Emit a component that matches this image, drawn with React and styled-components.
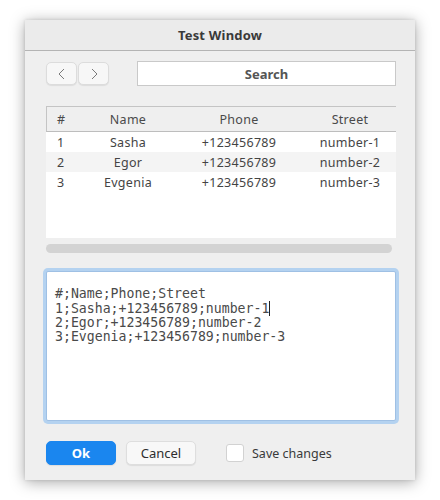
import React from "react";
import styled, { createGlobalStyle } from "styled-components";

const Global = createGlobalStyle`
  html, body { margin: 0; padding: 0; background: #ffffff; }
  body { font-family: "Noto Sans", "Open Sans", sans-serif; }
`;

const Page = styled.div`
  padding: 20px 25px;
`;

const Window = styled.div`
  width: 390px;
  height: 460px;
  background: #efefef;
  box-shadow: 0 2px 14px rgba(0, 0, 0, 0.35), 0 0 3px rgba(0, 0, 0, 0.12);
  display: flex;
  flex-direction: column;
`;

const TitleBar = styled.div`
  height: 30px;
  border-bottom: 1px solid #b4b4b4;
  background: #ebebeb;
  display: flex;
  align-items: center;
  justify-content: center;
  font-weight: 700;
  font-size: 13px;
  color: #3a3a3a;
  letter-spacing: 0.2px;
`;

const Body = styled.div`
  flex: 1;
  padding: 10px 19px 0 21px;
  display: flex;
  flex-direction: column;
`;

const Toolbar = styled.div`
  display: flex;
  align-items: center;
  height: 25px;
`;

const NavGroup = styled.div`
  display: flex;
  gap: 1px;
`;

const NavButton = styled.button`
  width: 31px;
  height: 23px;
  padding: 0;
  border: 1px solid #dcdcdc;
  border-radius: 5px;
  background: #f7f7f7;
  box-shadow: 0 1px 1px rgba(0, 0, 0, 0.08);
  display: flex;
  align-items: center;
  justify-content: center;
`;

const SearchBox = styled.div`
  margin-left: 28px;
  width: 259px;
  height: 25px;
  box-sizing: border-box;
  border: 1px solid #c9c9c9;
  background: #ffffff;
  display: flex;
  align-items: center;
  justify-content: center;
  font-weight: 700;
  font-size: 13px;
  color: #555555;
`;

const TableWrap = styled.div`
  margin-top: 20px;
  width: 350px;
  height: 132px;
  background: #ffffff;
  overflow: hidden;
`;

const Grid = styled.div`
  display: grid;
  grid-template-columns: 32px 100px 122px 100px;
  font-size: 12.5px;
  color: #444444;
  letter-spacing: 0.3px;
`;

const HeadCell = styled.div`
  height: 24px;
  background: #efefef;
  border-top: 1px solid #c4c4c4;
  border-bottom: 1px solid #bdbdbd;
  display: flex;
  align-items: center;
  justify-content: ${(p) => (p.$left ? "flex-start" : "center")};
  padding-left: ${(p) => (p.$left ? "10px" : "0")};
  border-left: ${(p) => (p.$left ? "1px solid #c4c4c4" : "none")};
  color: #4a4a4a;
`;

const Cell = styled.div`
  height: 20px;
  background: ${(p) => (p.$alt ? "#f4f4f4" : "#ffffff")};
  display: flex;
  align-items: center;
  justify-content: ${(p) => (p.$left ? "flex-start" : "center")};
  padding-left: ${(p) => (p.$left ? "11px" : "0")};
`;

const Scrollbar = styled.div`
  margin-top: 6px;
  width: 346px;
  height: 9px;
  border-radius: 5px;
  background: #d3d3d3;
`;

const Editor = styled.div`
  margin-top: 18px;
  width: 350px;
  height: 150px;
  box-sizing: border-box;
  background: #ffffff;
  border: 1px solid #9fc0e4;
  box-shadow: 0 0 0 3px #b4d2f0;
  border-radius: 2px;
  padding: 15px 0 0 8px;
  font-family: "DejaVu Sans Mono", "Liberation Mono", monospace;
  font-size: 13.2px;
  line-height: 14px;
  color: #4a4a4a;
  white-space: pre;
`;

const Caret = styled.span`
  display: inline-block;
  width: 1px;
  height: 15px;
  background: #222;
  vertical-align: -3px;
`;

const Footer = styled.div`
  margin-top: 20px;
  display: flex;
  align-items: center;
`;

const Button = styled.button`
  width: 70px;
  height: 24px;
  border-radius: 5px;
  font-family: "Noto Sans", sans-serif;
  font-size: 13px;
  padding: 0;
  margin-right: 10px;
  border: 1px solid ${(p) => (p.$primary ? "#1a86ef" : "#dedede")};
  background: ${(p) => (p.$primary ? "#1a86ef" : "#f8f8f8")};
  color: ${(p) => (p.$primary ? "#ffffff" : "#2e2e2e")};
  font-weight: ${(p) => (p.$primary ? 700 : 400)};
  box-shadow: 0 1px 1px rgba(0, 0, 0, 0.08);
`;

const CheckLabel = styled.label`
  margin-left: 20px;
  display: flex;
  align-items: center;
  gap: 8px;
  font-size: 12.5px;
  color: #3a3a3a;
  letter-spacing: 0px;
`;

const Box = styled.span`
  width: 18px;
  height: 18px;
  box-sizing: border-box;
  border: 1px solid #d2d2d2;
  border-radius: 3px;
  background: #ffffff;
`;

const Chevron = ({ dir }) => (
  <svg width="10" height="14" viewBox="0 0 10 14">
    <polyline
      points={dir === "left" ? "7,2 2,7 7,12" : "3,2 8,7 3,12"}
      fill="none"
      stroke="#7a7a7a"
      strokeWidth="1"
    />
  </svg>
);

const rows = [
  ["1", "Sasha", "+123456789", "number-1"],
  ["2", "Egor", "+123456789", "number-2"],
  ["3", "Evgenia", "+123456789", "number-3"],
];

export default function App() {
  return (
    <Page>
      <Global />
      <Window>
        <TitleBar>Test Window</TitleBar>
        <Body>
          <Toolbar>
            <NavGroup>
              <NavButton><Chevron dir="left" /></NavButton>
              <NavButton><Chevron dir="right" /></NavButton>
            </NavGroup>
            <SearchBox>Search</SearchBox>
          </Toolbar>
          <TableWrap>
            <Grid>
              <HeadCell $left>#</HeadCell>
              <HeadCell>Name</HeadCell>
              <HeadCell>Phone</HeadCell>
              <HeadCell>Street</HeadCell>
              {rows.map((r, i) =>
                r.map((c, j) => (
                  <Cell key={`${i}-${j}`} $left={j === 0} $alt={i === 1}>
                    {c}
                  </Cell>
                ))
              )}
            </Grid>
          </TableWrap>
          <Scrollbar />
          <Editor>
            {"#;Name;Phone;Street\n1;Sasha;+123456789;number-1"}
            <Caret />
            {"\n2;Egor;+123456789;number-2\n3;Evgenia;+123456789;number-3"}
          </Editor>
          <Footer>
            <Button $primary>Ok</Button>
            <Button>Cancel</Button>
            <CheckLabel>
              <Box />
              Save changes
            </CheckLabel>
          </Footer>
        </Body>
      </Window>
    </Page>
  );
}
